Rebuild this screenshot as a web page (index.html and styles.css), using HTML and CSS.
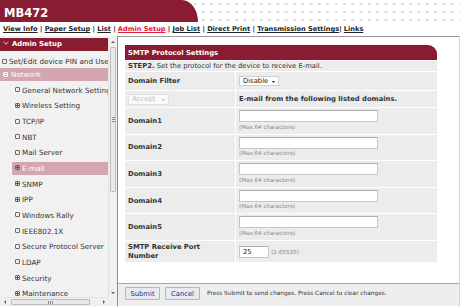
FILE: index.html
```html
<!DOCTYPE html>
<html lang="en">
<head>
  <meta charset="UTF-8">
  <meta name="viewport" content="width=device-width, initial-scale=1.0">
  <title>MB472 - SMTP Protocol Settings</title>
  <link rel="stylesheet" href="styles.css">
</head>
<body>
  <div class="top">
    <div class="brand">MB472</div>
  </div>
  <div class="nav">
    <a href="#">View Info</a> | <a href="#">Paper Setup</a> | <a href="#">List</a> | <a href="#" class="cur">Admin Setup</a> | <a href="#">Job List</a> | <a href="#">Direct Print</a> | <a href="#">Transmission Settings</a>| <a href="#">Links</a>
  </div>
  <div class="main">
    <div class="side">
      <div class="side-body">
        <div class="tree">
          <div class="tree-head"><span class="arr"></span>Admin Setup</div>
          <div class="it first"><i class="ic"></i>Set/Edit device PIN and User</div>
          <div class="it net on"><i class="ic minus inv"></i>Network</div>
          <div class="it sub"><i class="ic"></i>General Network Setting</div>
          <div class="it sub"><i class="ic plus"></i>Wireless Setting</div>
          <div class="it sub"><i class="ic"></i>TCP/IP</div>
          <div class="it sub"><i class="ic"></i>NBT</div>
          <div class="it sub"><i class="ic"></i>Mail Server</div>
          <div class="it sub on"><i class="ic plus"></i>E-mail</div>
          <div class="it sub"><i class="ic plus"></i>SNMP</div>
          <div class="it sub"><i class="ic plus"></i>IPP</div>
          <div class="it sub"><i class="ic"></i>Windows Rally</div>
          <div class="it sub"><i class="ic"></i>IEEE802.1X</div>
          <div class="it sub"><i class="ic"></i>Secure Protocol Server</div>
          <div class="it sub"><i class="ic"></i>LDAP</div>
          <div class="it sub"><i class="ic plus"></i>Security</div>
          <div class="it sub"><i class="ic plus"></i>Maintenance</div>
        </div>
        <div class="vbar">
          <div class="sb-btn"><span class="tri up"></span></div>
          <div class="sb-track"><div class="sb-thumb"><span class="grip"></span></div></div>
          <div class="sb-btn"><span class="tri down"></span></div>
        </div>
      </div>
      <div class="hbar">
        <div class="hb">
          <div class="sb-btn h"><span class="tri left"></span></div>
          <div class="hb-track"><div class="hb-thumb"><span class="grip v"></span></div></div>
          <div class="sb-btn h"><span class="tri right"></span></div>
        </div>
        <div class="corner"></div>
      </div>
    </div>

    <div class="content">
      <div class="pane">
        <table class="form">
          <colgroup><col class="c1"><col class="c2"></colgroup>
          <tr class="title"><td colspan="2">SMTP Protocol Settings</td></tr>
          <tr class="step"><td colspan="2"><b>STEP2.</b> Set the protocol for the device to receive E-mail.</td></tr>
          <tr class="filter">
            <td class="lbl">Domain Filter</td>
            <td><select class="sel"><option>Disable</option></select></td>
          </tr>
          <tr class="accept">
            <td><select class="sel off" disabled><option>Accept</option></select></td>
            <td class="lbl">E-mail from the following listed domains.</td>
          </tr>
          <tr class="dom">
            <td class="lbl">Domain1</td>
            <td class="val"><input type="text" class="inp"><div class="hint">(Max.64 characters)</div></td>
          </tr>
          <tr class="dom">
            <td class="lbl">Domain2</td>
            <td class="val"><input type="text" class="inp"><div class="hint">(Max.64 characters)</div></td>
          </tr>
          <tr class="dom">
            <td class="lbl">Domain3</td>
            <td class="val"><input type="text" class="inp"><div class="hint">(Max.64 characters)</div></td>
          </tr>
          <tr class="dom">
            <td class="lbl">Domain4</td>
            <td class="val"><input type="text" class="inp"><div class="hint">(Max.64 characters)</div></td>
          </tr>
          <tr class="dom">
            <td class="lbl">Domain5</td>
            <td class="val"><input type="text" class="inp"><div class="hint">(Max.64 characters)</div></td>
          </tr>
          <tr class="port">
            <td class="lbl">SMTP Receive Port Number</td>
            <td><input type="text" class="inp short" value="25"> <span class="range">(1-65535)</span></td>
          </tr>
        </table>
      </div>
      <div class="bar">
        <button class="btn">Submit</button>
        <button class="btn">Cancel</button>
        <span class="note">Press Submit to send changes. Press Cancel to clear changes.</span>
      </div>
    </div>
  </div>
</body>
</html>
```

FILE: styles.css
```css
* {
  box-sizing: border-box;
}
body {
  margin: 0;
  width: 460px;
  height: 306px;
  overflow: hidden;
  font-family: "DejaVu Sans", Verdana, sans-serif;
  font-size: 6.8px;
  color: #333;
  background-color: #fff;
}
.top {
  height: 22px;
  background-color: #fff;
  background-image: radial-gradient(circle, #cfcfcf 0.8px, transparent 1.3px);
  background-size: 8.3px 8px;
}
.brand {
  width: 198px;
  height: 22px;
  background-color: #8a1c32;
  border-top-right-radius: 16px 22px;
  color: #fff;
  font-weight: bold;
  font-size: 11.5px;
  line-height: 22px;
  padding: 2px 0 0 4px;
}
.nav {
  height: 14px;
  line-height: 14px;
  padding-left: 3px;
  font-size: 6.6px;
  font-weight: bold;
  color: #222;
  white-space: nowrap;
}
.nav a {
  color: #222;
  text-decoration: underline;
}
.nav a.cur {
  color: #e0203c;
}
.main {
  display: flex;
  height: 270px;
}

/* left tree */
.side {
  width: 117px;
  display: flex;
  flex-direction: column;
  background-color: #f1f1f1;
  padding-top: 2px;
}
.side-body {
  flex: 1;
  display: flex;
  min-height: 0;
}
.tree {
  width: 108px;
  overflow: hidden;
  white-space: nowrap;
  font-size: 7.2px;
}
.tree-head {
  height: 13px;
  line-height: 13px;
  background-color: #8a1c32;
  color: #fff;
  font-weight: bold;
  font-size: 6.9px;
  padding-left: 4px;
}
.arr {
  display: inline-block;
  width: 4px;
  height: 4px;
  margin-right: 4px;
  border-right: 1.5px solid #e88a9a;
  border-bottom: 1.5px solid #e88a9a;
  transform: rotate(45deg);
  vertical-align: middle;
  position: relative;
  top: -2px;
}
.it {
  height: 13px;
  line-height: 13px;
  margin-top: 2.67px;
  padding-left: 2px;
  color: #333;
}
.it.first {
  margin-top: 4px;
}
.it.net {
  margin-top: 0;
  padding-left: 3px;
}
.it.sub {
  margin-left: 12px;
  padding-left: 3px;
}
.it.on {
  background-color: #d4a6ae;
  color: #fff;
}
.ic {
  display: inline-block;
  width: 5px;
  height: 5px;
  border: 1px solid #6a6a6a;
  border-radius: 1px;
  margin-right: 2px;
  vertical-align: middle;
  position: relative;
  top: -1px;
}
.it.net .ic {
  margin-right: 3px;
}
.ic.plus::before,
.ic.minus::before {
  content: "";
  position: absolute;
  left: 0;
  right: 0;
  top: 1px;
  height: 1px;
  background-color: #555;
}
.ic.plus::after {
  content: "";
  position: absolute;
  top: 0;
  bottom: 0;
  left: 1px;
  width: 1px;
  background-color: #555;
}
.ic.inv {
  border-color: #fff;
}
.ic.inv::before {
  background-color: #fff;
}

/* fake scrollbars */
.vbar {
  width: 9px;
  display: flex;
  flex-direction: column;
  background-color: #f0f0f0;
  border-left: 1px solid #e2e2e2;
}
.sb-btn {
  height: 8px;
  display: flex;
  align-items: center;
  justify-content: center;
}
.sb-btn.h {
  height: auto;
  width: 9px;
}
.tri {
  width: 0;
  height: 0;
}
.tri.up {
  border-left: 2px solid transparent;
  border-right: 2px solid transparent;
  border-bottom: 2px solid #606060;
}
.tri.down {
  border-left: 2px solid transparent;
  border-right: 2px solid transparent;
  border-top: 2px solid #606060;
}
.tri.left {
  border-top: 2px solid transparent;
  border-bottom: 2px solid transparent;
  border-right: 2px solid #606060;
}
.tri.right {
  border-top: 2px solid transparent;
  border-bottom: 2px solid transparent;
  border-left: 2px solid #606060;
}
.sb-track {
  flex: 1;
  padding-top: 1px;
}
.sb-thumb {
  height: 145px;
  margin: 0 1px;
  border: 1px solid #bcbcbc;
  border-radius: 1px;
  background-color: #e9e9e9;
  display: flex;
  align-items: center;
  justify-content: center;
}
.grip {
  width: 3px;
  height: 5px;
  background-image: repeating-linear-gradient(to bottom, #888 0, #888 1px, transparent 1px, transparent 2px);
}
.grip.v {
  width: 5px;
  height: 3px;
  background-image: repeating-linear-gradient(to right, #888 0, #888 1px, transparent 1px, transparent 2px);
}
.hbar {
  height: 9px;
  display: flex;
}
.hb {
  width: 108px;
  display: flex;
  background-color: #f0f0f0;
  border-top: 1px solid #e2e2e2;
}
.hb-track {
  flex: 1;
  padding: 1px 0 0 2px;
}
.hb-thumb {
  width: 79px;
  height: 6px;
  border: 1px solid #bcbcbc;
  border-radius: 1px;
  background-color: #e9e9e9;
  display: flex;
  align-items: center;
  justify-content: center;
}
.corner {
  width: 9px;
  background-color: #f0f0f0;
}

/* right content */
.content {
  flex: 1;
  display: flex;
  flex-direction: column;
  border-top: 1px solid #9a9a9a;
  border-left: 1px solid #8c8c8c;
  border-right: 1px solid #d6d6d6;
}
.pane {
  flex: 1;
  padding: 7px 0 0 6px;
}
.form {
  table-layout: fixed;
  border-spacing: 1px;
  width: 314px;
}
.form .c1 {
  width: 110px;
}
.form td {
  background-color: #ececec;
  padding: 0 3px;
  vertical-align: middle;
}
.form .title td {
  background-color: #8a1c32;
  color: #fff;
  font-weight: bold;
  height: 15px;
  border-top-right-radius: 9px;
}
.form .step td {
  height: 10px;
  line-height: 10px;
}
.form .filter td {
  height: 18px;
}
.form .accept td {
  height: 16px;
}
.form .dom td {
  height: 25.6px;
}
.form .dom td.val {
  vertical-align: top;
  padding-top: 2px;
}
.form .port td {
  height: 21.3px;
  line-height: 8.5px;
}
.lbl {
  font-weight: bold;
}
.sel {
  appearance: none;
  -webkit-appearance: none;
  font-family: "DejaVu Sans", Verdana, sans-serif;
  font-size: 6.8px;
  color: #222;
  width: 40px;
  height: 10px;
  padding: 0 0 0 3px;
  border: 1px solid #d0d0d0;
  border-radius: 0;
  background-color: #fff;
  background-image: linear-gradient(45deg, transparent 50%, #555 50%), linear-gradient(135deg, #555 50%, transparent 50%);
  background-size: 2px 2px, 2px 2px;
  background-position: 32px 4px, 34px 4px;
  background-repeat: no-repeat;
  display: block;
}
.sel.off {
  width: 41px;
  height: 11px;
  color: #aaa;
  border-color: #dcdcdc;
  background-image: linear-gradient(45deg, transparent 50%, #bbb 50%), linear-gradient(135deg, #bbb 50%, transparent 50%);
  background-position: 33px 4px, 35px 4px;
}
.inp {
  display: block;
  width: 139px;
  height: 12px;
  padding: 0 3px;
  border: 1px solid #c6c6c6;
  border-top-color: #b0b0b0;
  background-color: #fff;
  font-family: "DejaVu Sans", Verdana, sans-serif;
  font-size: 6.8px;
  color: #222;
}
.inp.short {
  display: inline-block;
  width: 30px;
  vertical-align: middle;
}
.hint {
  font-size: 5.6px;
  line-height: 7px;
  margin-top: 1.5px;
  color: #888;
}
.range {
  font-size: 5.6px;
  color: #888;
  vertical-align: middle;
}

/* bottom bar */
.bar {
  height: 23px;
  border-top: 1px solid #a8a8a8;
  background-color: #eeeeee;
  display: flex;
  align-items: flex-start;
  gap: 5px;
  padding: 3px 0 0 7px;
}
.btn {
  width: 35px;
  height: 13px;
  padding: 0;
  font-family: "DejaVu Sans", Verdana, sans-serif;
  font-size: 6.8px;
  color: #2b2b8c;
  background-color: #e9e9f0;
  border: 1px solid #b4b4c6;
  border-radius: 1px;
}
.note {
  font-size: 5.8px;
  line-height: 13px;
  margin-left: 2px;
  color: #333;
}
```
